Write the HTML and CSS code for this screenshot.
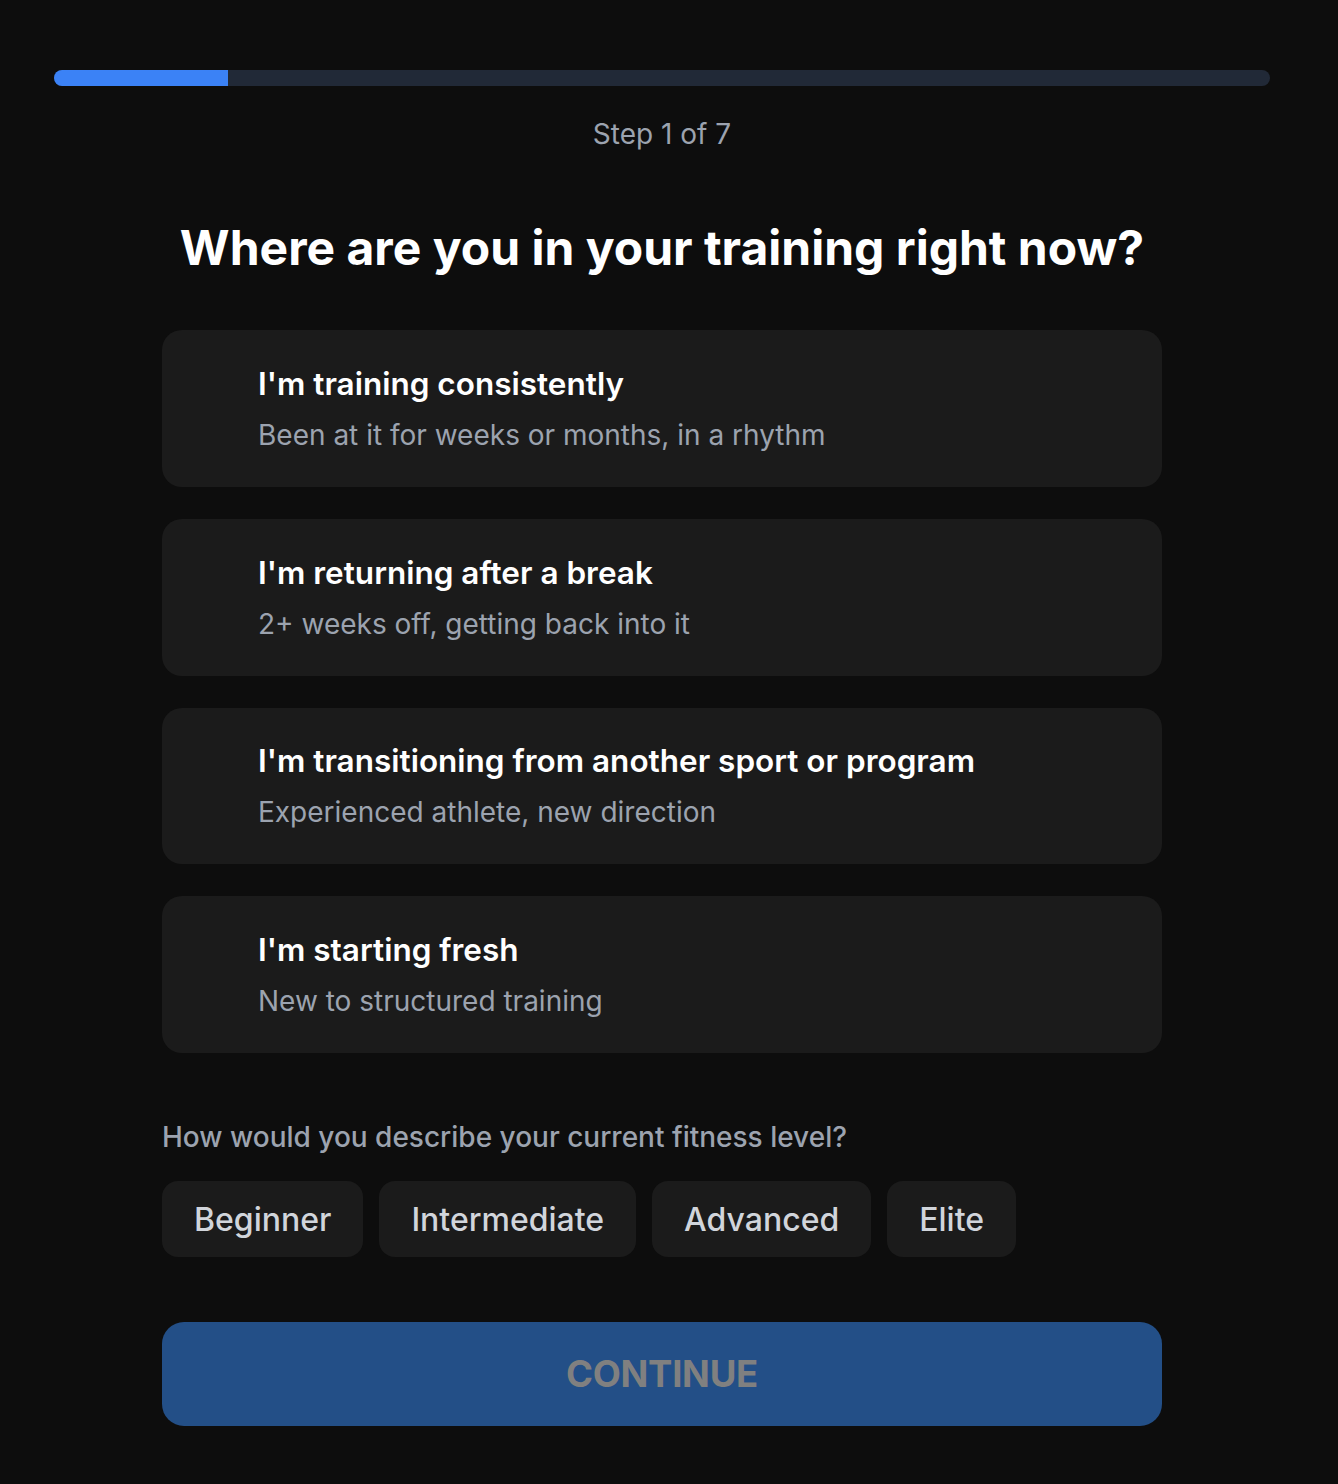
FILE: index.html
```html
<!DOCTYPE html>
<html lang="en">
<head>
<meta charset="utf-8">
<title>Onboarding</title>
<link rel="stylesheet" href="styles.css">
</head>
<body>
<div class="page">
  <div class="progress"><div class="progress-fill" style="width: 14.2857%"></div></div>
  <p class="step">Step 1 of 7</p>
  <main class="content">
    <h1 class="heading">Where are you in your training right now?</h1>
    <div class="options">
      <button class="option">
        <span class="option-title">I'm training consistently</span>
        <span class="option-sub">Been at it for weeks or months, in a rhythm</span>
      </button>
      <button class="option">
        <span class="option-title">I'm returning after a break</span>
        <span class="option-sub">2+ weeks off, getting back into it</span>
      </button>
      <button class="option">
        <span class="option-title">I'm transitioning from another sport or program</span>
        <span class="option-sub">Experienced athlete, new direction</span>
      </button>
      <button class="option">
        <span class="option-title">I'm starting fresh</span>
        <span class="option-sub">New to structured training</span>
      </button>
    </div>
    <p class="question">How would you describe your current fitness level?</p>
    <div class="chips">
      <button class="chip">Beginner</button>
      <button class="chip">Intermediate</button>
      <button class="chip">Advanced</button>
      <button class="chip">Elite</button>
    </div>
    <button class="continue">CONTINUE</button>
  </main>
</div>
</body>
</html>
```

FILE: styles.css
```css
* { box-sizing: border-box; }
html, body {
  margin: 0;
  padding: 0;
  background: #0d0d0d;
}
body {
  font-family: Inter, "Noto Sans", sans-serif;
  color: #ffffff;
}
.page {
  padding: 70px 68px 58px 54px;
}
.progress {
  height: 16px;
  border-radius: 8px;
  background: #212937;
  overflow: hidden;
}
.progress-fill {
  height: 100%;
  background: #3b82f6;
}
.step {
  margin: 30px 0 0;
  text-align: center;
  font-size: 28px;
  line-height: 36px;
  color: #9ca3af;
}
.content {
  width: 1000px;
  margin: 0 auto;
}
.heading {
  margin: 67px 0 53px;
  text-align: center;
  font-size: 48px;
  line-height: 58px;
  font-weight: 700;
  color: #ffffff;
}
.options {
  display: flex;
  flex-direction: column;
  gap: 32px;
}
.option {
  display: flex;
  flex-direction: column;
  align-items: flex-start;
  gap: 13px;
  height: 156.75px;
  justify-content: center;
  padding: 0 32px 0 96px;
  border: none;
  border-radius: 20px;
  background: #1b1b1b;
  font-family: inherit;
  text-align: left;
  cursor: pointer;
}
.option-title {
  font-size: 31.5px;
  line-height: 40px;
  font-weight: 600;
  color: #ffffff;
}
.option-sub {
  font-size: 28px;
  line-height: 36px;
  color: #9ca3af;
}
.question {
  margin: 66px 0 26px;
  font-size: 28px;
  line-height: 36px;
  font-weight: 500;
  color: #9ca3af;
}
.chips {
  display: flex;
  gap: 16px;
}
.chip {
  height: 76px;
  padding: 0 32px;
  border: none;
  border-radius: 16px;
  background: #1b1b1b;
  color: #d1d5db;
  font-family: inherit;
  font-size: 32px;
  font-weight: 500;
  cursor: pointer;
}
.continue {
  display: block;
  width: 100%;
  height: 104px;
  margin-top: 65px;
  border: none;
  border-radius: 22px;
  background: #234f87;
  color: #808080;
  font-family: inherit;
  font-size: 36.5px;
  font-weight: 700;
  letter-spacing: -0.3px;
  cursor: not-allowed;
}
```
